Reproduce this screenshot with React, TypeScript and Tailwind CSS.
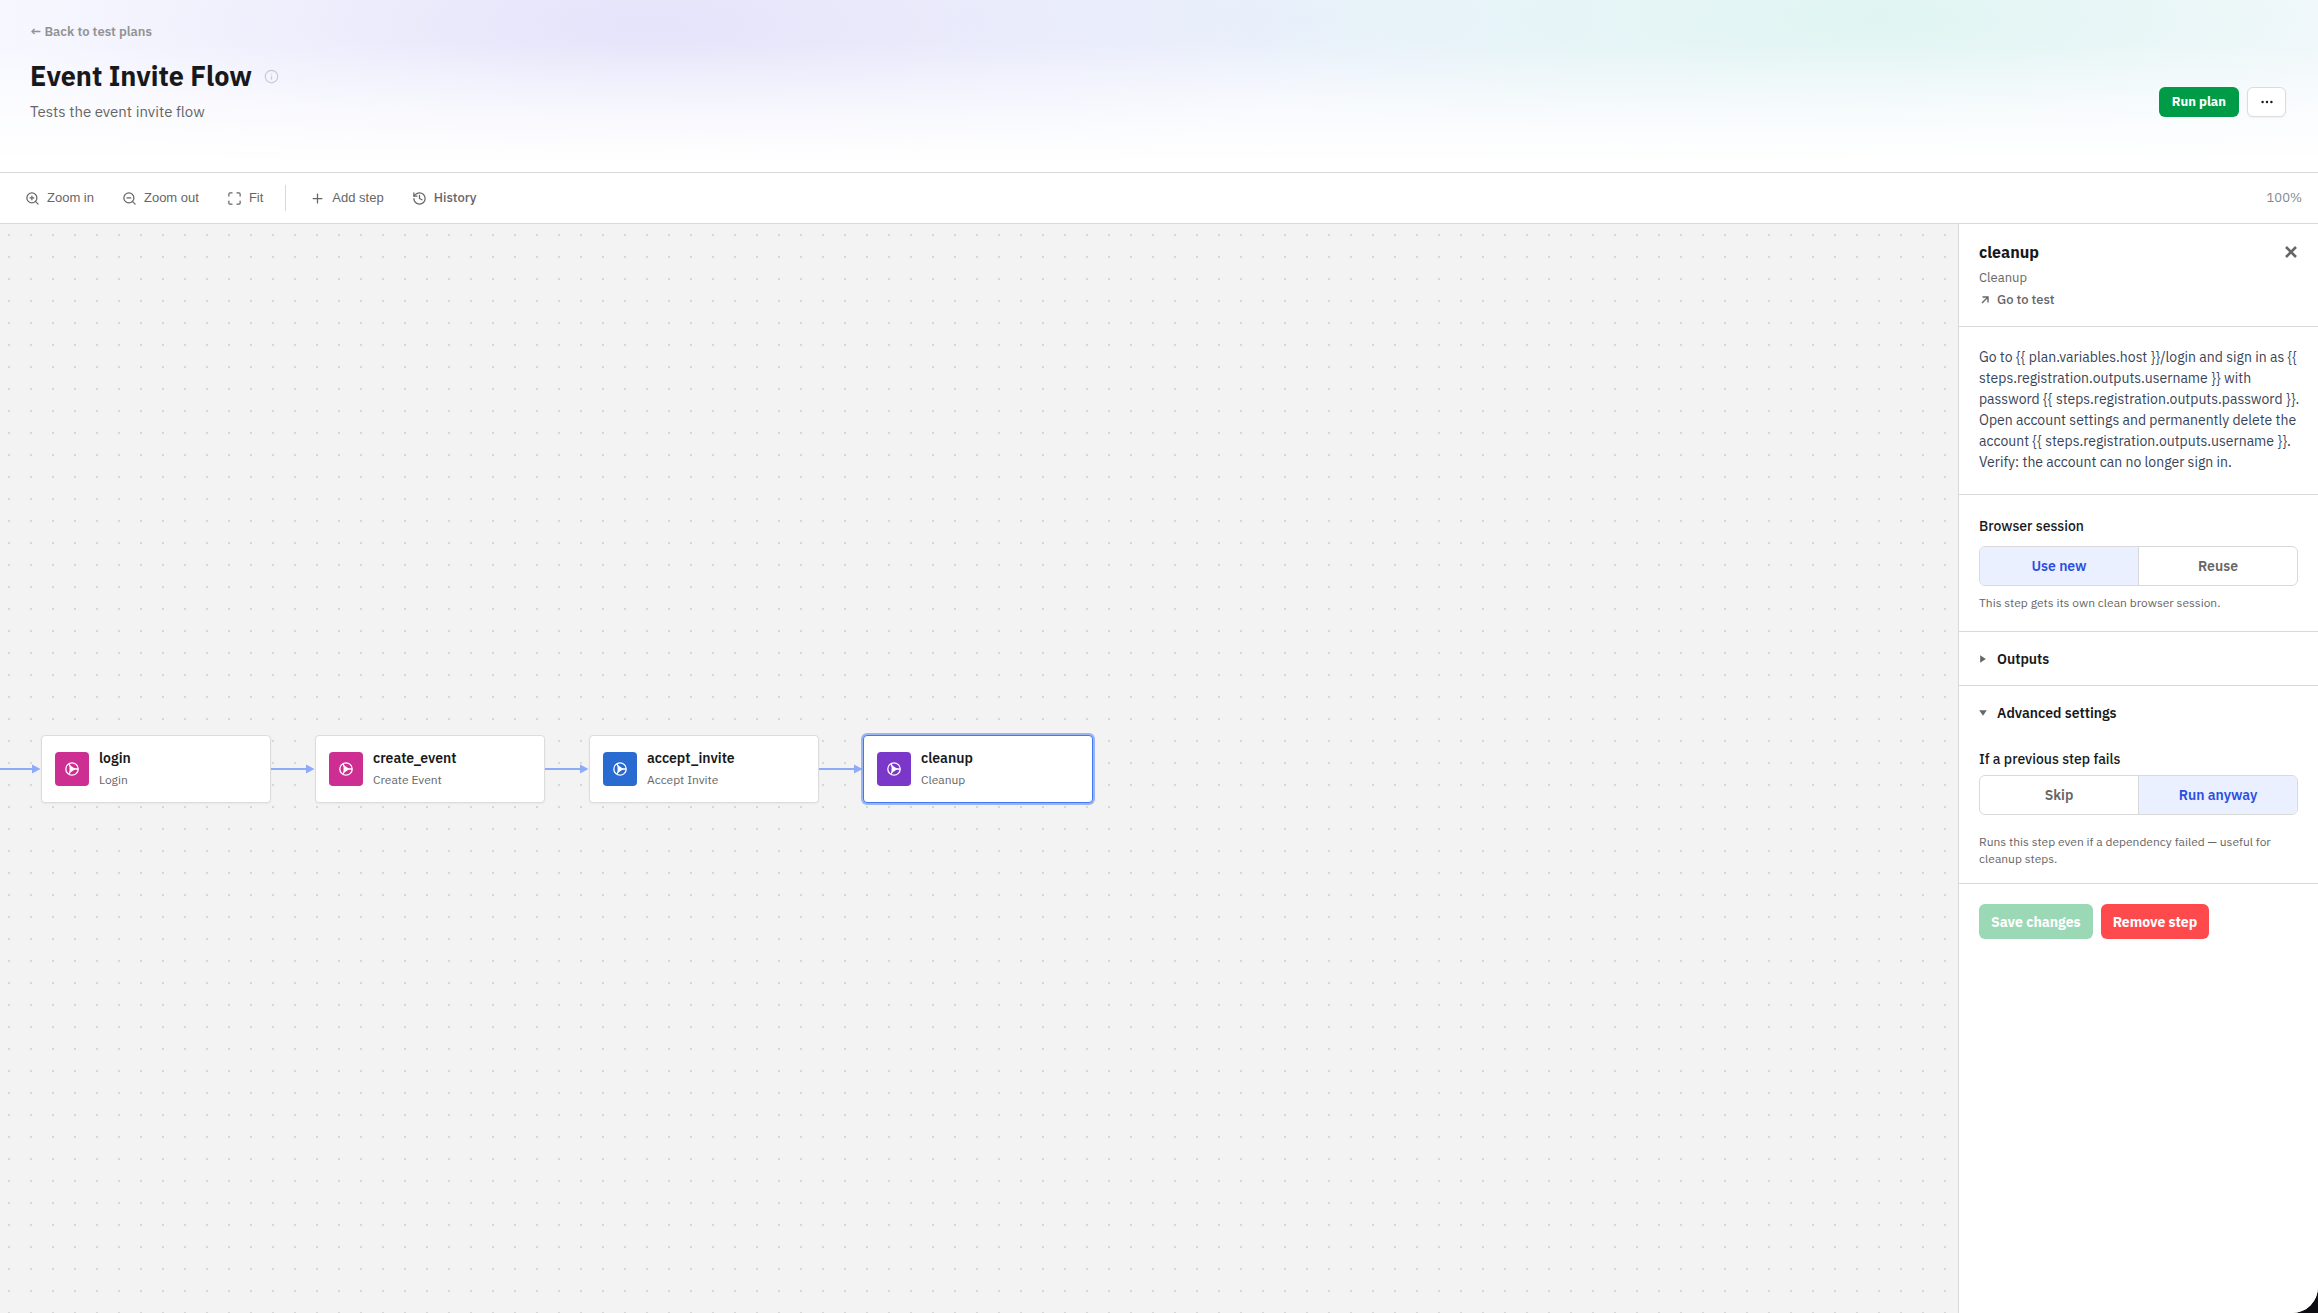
import { useState, type ReactNode } from "react";
import { History, Info, Maximize, Plus, ZoomIn, ZoomOut } from "lucide-react";

const STEPS = [
  { id: "login", title: "Login", color: "bg-[#cc2e91]" },
  { id: "create_event", title: "Create Event", color: "bg-[#cc2e91]" },
  { id: "accept_invite", title: "Accept Invite", color: "bg-[#2a6bd1]" },
  { id: "cleanup", title: "Cleanup", color: "bg-[#7a37c9]" },
];

export default function App() {
  const [selectedId, setSelectedId] = useState("cleanup");

  return (
    <div className="bg-[#0c0c12]">
      <div className="flex min-h-screen flex-col overflow-hidden rounded-br-[26px] bg-white font-['IBM_Plex_Sans','Roboto',sans-serif] text-[#18191b]">
        <PlanHeader />
        <Toolbar />
        <div className="flex flex-1">
          <main className="flex flex-1 items-center overflow-hidden bg-[#f3f3f3] bg-[radial-gradient(circle,#d6d6d6_1px,transparent_1px)] bg-[size:22px_22px] bg-[position:-2px_0]">
            <div className="-ml-[3px] flex">
              {STEPS.map((step) => (
                <div className="flex items-center" key={step.id}>
                  <Connector />
                  <StepNode
                    isSelected={step.id === selectedId}
                    onSelect={() => setSelectedId(step.id)}
                    step={step}
                  />
                </div>
              ))}
            </div>
          </main>
          <StepPanel />
        </div>
      </div>
    </div>
  );
}

function PlanHeader() {
  return (
    <header className="flex items-center justify-between border-b border-[#d9d9d9] bg-[linear-gradient(to_bottom,transparent_25%,white_96%),radial-gradient(ellipse_30%_110%_at_28%_14%,#e5e3fa,transparent),radial-gradient(ellipse_30%_100%_at_81%_10%,#e0f5f2,transparent),radial-gradient(ellipse_40%_110%_at_56%_10%,#e9f0fb,transparent),linear-gradient(#f8f9ff,#f8f9ff)] pt-6 pr-8 pb-12 pl-[30px]">
      <div>
        <a className="block text-[13px] leading-4 font-semibold text-[#929292]" href="#plans">
          ← Back to test plans
        </a>
        <div className="mt-4 flex items-center gap-3">
          <h1 className="text-[27px] leading-10 font-bold">Event Invite Flow</h1>
          <Info className="size-[15px] text-[#cbc9d6]" />
        </div>
        <p className="mt-1 text-[15px] leading-6 text-[#666]">Tests the event invite flow</p>
      </div>
      <div className="flex gap-2 pt-14">
        <button className="h-[30px] rounded-md bg-[#009b46] px-[13px] text-[13px] font-bold text-white">
          Run plan
        </button>
        <button
          aria-label="More actions"
          className="flex h-[30px] w-[39px] items-center justify-center rounded-md border border-[#dcdcdc] bg-white shadow-xs"
        >
          <svg className="w-3" fill="#18191b" viewBox="0 0 12 4">
            <circle cx="1.6" cy="2" r="1.2" />
            <circle cx="6" cy="2" r="1.2" />
            <circle cx="10.4" cy="2" r="1.2" />
          </svg>
        </button>
      </div>
    </header>
  );
}

function Toolbar() {
  return (
    <div className="flex h-[51px] items-center border-b border-[#d9d9d9] pr-4 pl-[25px] text-[13px] text-[#666]">
      <div className="flex items-center gap-7 font-['Liberation_Sans',sans-serif]">
        <ToolButton icon={<ZoomIn className="size-[15px]" />} label="Zoom in" />
        <ToolButton icon={<ZoomOut className="size-[15px]" />} label="Zoom out" />
        <ToolButton icon={<Maximize className="size-[15px]" />} label="Fit" />
      </div>
      <div className="mr-6 ml-[22px] h-[26px] w-px bg-[#d9d9d9]" />
      <div className="flex items-center gap-7 font-['Liberation_Sans',sans-serif]">
        <ToolButton icon={<Plus className="size-[15px]" />} label="Add step" />
        <a
          className="flex items-center gap-[7px] font-['IBM_Plex_Sans','Roboto',sans-serif] font-medium"
          href="#history"
        >
          <History className="size-[15px]" />
          History
        </a>
      </div>
      <span className="ml-auto text-[#888]">100%</span>
    </div>
  );
}

function ToolButton({ icon, label }: { icon: ReactNode; label: string }) {
  return (
    <button className="flex items-center gap-[7px]">
      {icon}
      {label}
    </button>
  );
}

function Connector() {
  return (
    <svg className="h-3 w-11 shrink-0" viewBox="0 0 44 12">
      <path d="M0 6h38" stroke="#8dabf8" strokeWidth="2" />
      <path d="M35 1.5 43.5 6 35 10.5Z" fill="#8dabf8" />
    </svg>
  );
}

type StepNodeProps = {
  isSelected: boolean;
  onSelect: () => void;
  step: { id: string; title: string; color: string };
};

function StepNode({ isSelected, onSelect, step }: StepNodeProps) {
  return (
    <button
      aria-pressed={isSelected}
      className={
        isSelected
          ? "flex h-[68px] w-[230px] items-center gap-[10px] rounded border border-[#4377f5] bg-white px-[13px] text-left ring-2 ring-[#4377f5]/50"
          : "flex h-[68px] w-[230px] items-center gap-[10px] rounded border border-[#dcdcdc] bg-white px-[13px] text-left shadow-xs"
      }
      onClick={onSelect}
    >
      <span className={`flex size-[34px] items-center justify-center rounded ${step.color}`}>
        <StepIcon />
      </span>
      <span>
        <span className="block text-sm leading-[22px] font-semibold">{step.id}</span>
        <span className="block text-xs leading-[22px] text-[#666]">{step.title}</span>
      </span>
    </button>
  );
}

function StepIcon() {
  return (
    <svg className="size-[14px]" fill="none" stroke="white" strokeWidth="1.3" viewBox="0 0 14 14">
      <circle cx="7" cy="7" r="6.2" />
      <path d="M5.2 4.2v5.6L9.4 7Z" fill="white" />
      <path d="M9 7h4.2M5.2 4.4 3.8 1.8M5.2 9.6l-1.4 2.6" />
    </svg>
  );
}

function StepPanel() {
  return (
    <aside className="w-[360px] shrink-0 border-l border-[#d9d9d9] bg-white">
      <div className="border-b border-[#d9d9d9] px-5 py-4">
        <div className="flex items-center justify-between">
          <h2 className="text-base leading-6 font-bold">cleanup</h2>
          <button aria-label="Close" className="text-[#666]">
            <svg className="size-[14px]" stroke="currentColor" strokeWidth="2.6" viewBox="0 0 14 14">
              <path d="m2 2 10 10M12 2 2 12" />
            </svg>
          </button>
        </div>
        <p className="mt-1 text-[13px] leading-5 text-[#666]">Cleanup</p>
        <a
          className="mt-0.5 flex items-center gap-2 text-[13px] leading-5 font-medium text-[#666]"
          href="#test"
        >
          <svg className="ml-0.5 size-2" fill="none" stroke="currentColor" strokeWidth="1.4" viewBox="0 0 8 8">
            <path d="M1 7 7 1M1.5 1H7v5.5" />
          </svg>
          Go to test
        </a>
      </div>
      <p className="border-b border-[#d9d9d9] pt-5 pr-4 pb-[21px] pl-5 text-sm leading-[21px] text-[#384457]">
        {
          "Go to {{ plan.variables.host }}/login and sign in as {{ steps.registration.outputs.username }} with password {{ steps.registration.outputs.password }}. Open account settings and permanently delete the account {{ steps.registration.outputs.username }}. Verify: the account can no longer sign in."
        }
      </p>
      <div className="border-b border-[#d9d9d9] px-5 pt-[19px] pb-5">
        <SegmentedControl
          label="Browser session"
          legendClassName="pb-2"
          name="session"
          options={["Use new", "Reuse"]}
          selected="Use new"
        />
        <p className="mt-2 text-xs leading-[17px] text-[#666]">
          This step gets its own clean browser session.
        </p>
      </div>
      <details className="group border-b border-[#d9d9d9] px-5">
        <DisclosureSummary label="Outputs" />
      </details>
      <details className="group border-b border-[#d9d9d9] px-5" open>
        <DisclosureSummary label="Advanced settings" />
        <div className="pt-2 pb-4">
          <SegmentedControl
            label="If a previous step fails"
            legendClassName="pb-1"
            name="failure"
            options={["Skip", "Run anyway"]}
            selected="Run anyway"
          />
          <p className="mt-[18px] text-xs leading-[17px] text-[#666]">
            Runs this step even if a dependency failed — useful for cleanup steps.
          </p>
        </div>
      </details>
      <div className="flex gap-2 p-5 text-sm font-bold text-white">
        <button className="h-[35px] rounded-md bg-[#9bd8b5] px-3">Save changes</button>
        <button className="h-[35px] rounded-md bg-[#ff4a4d] px-3">Remove step</button>
      </div>
    </aside>
  );
}

function DisclosureSummary({ label }: { label: string }) {
  return (
    <summary className="flex h-[53px] cursor-pointer list-none items-center gap-[10px] text-sm font-semibold">
      <svg className="size-2 group-open:rotate-90" fill="#666" viewBox="0 0 8 8">
        <path d="M1.2.2 6.8 4 1.2 7.8Z" />
      </svg>
      {label}
    </summary>
  );
}

type SegmentedControlProps = {
  label: string;
  legendClassName: string;
  name: string;
  options: string[];
  selected: string;
};

function SegmentedControl({ label, legendClassName, name, options, selected }: SegmentedControlProps) {
  return (
    <fieldset>
      <legend className={`text-sm leading-6 font-medium ${legendClassName}`}>{label}</legend>
      <div className="flex h-10 divide-x divide-[#d9d9d9] overflow-hidden rounded-md border border-[#d9d9d9]">
        {options.map((option) => (
          <label
            className="flex flex-1 cursor-pointer items-center justify-center text-sm font-semibold text-[#666] has-checked:bg-[#eaf0ff] has-checked:text-[#2a4fdf]"
            key={option}
          >
            <input className="sr-only" defaultChecked={option === selected} name={name} type="radio" />
            {option}
          </label>
        ))}
      </div>
    </fieldset>
  );
}
